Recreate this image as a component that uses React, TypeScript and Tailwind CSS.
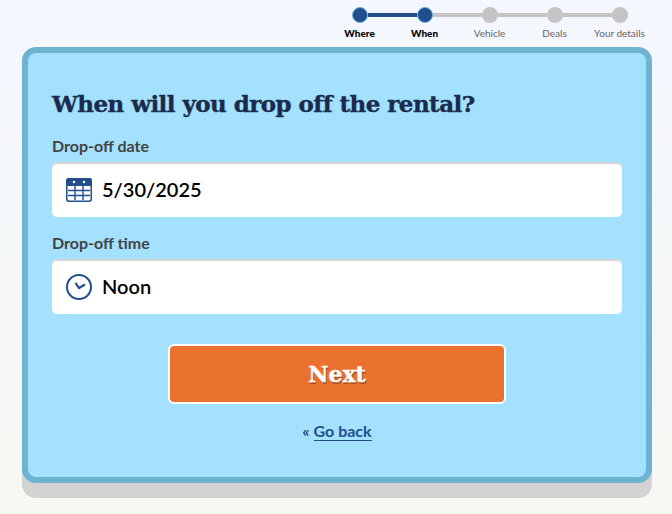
const steps = [
  { name: 'Where', done: true },
  { name: 'When', done: true },
  { name: 'Vehicle', done: false },
  { name: 'Deals', done: false },
  { name: 'Your details', done: false },
];

function Stepper() {
  return (
    <div className="flex flex-col items-end pr-[20px] pt-[7px]">
      <div className="flex items-center w-[325px] justify-center">
        {steps.map((s, i) => (
          <div key={s.name} className="flex items-center">
            {i > 0 && <div className={`w-[49px] h-1 ${i === 1 ? 'bg-[#234e8c]' : 'bg-[#c4c4c4]'}`} />}
            <div className={`w-4 h-4 rounded-full ${s.done ? 'bg-[#234e8c] border border-[#5fb0d8]' : 'bg-[#c4c4c4]'}`} />
          </div>
        ))}
      </div>
      <div className="flex w-[325px] mt-[3px]">
        {steps.map(s => (
          <div
            key={s.name}
            className={`w-[65px] text-center text-[10px] leading-[14px] whitespace-nowrap ${s.done ? 'font-black text-black' : 'text-[#666666]'}`}
          >
            {s.name}
          </div>
        ))}
      </div>
    </div>
  );
}

function CalendarIcon() {
  return (
    <svg width="26" height="24" viewBox="0 0 26 24" fill="none">
      <rect x="0.75" y="0.75" width="24.5" height="22.5" rx="2.5" fill="#fff" stroke="#234e8c" strokeWidth="1.5" />
      <path d="M0 3a3 3 0 0 1 3-3h20a3 3 0 0 1 3 3v5H0z" fill="#234e8c" />
      <circle cx="8" cy="4" r="1.2" fill="#fff" />
      <circle cx="18" cy="4" r="1.2" fill="#fff" />
      <path d="M2 12.5h22M2 17.5h22M9 8v14M17 8v14" stroke="#234e8c" strokeWidth="1.4" />
    </svg>
  );
}

function ClockIcon() {
  return (
    <svg width="26" height="26" viewBox="0 0 26 26" fill="none" stroke="#234e8c">
      <circle cx="13" cy="13" r="12" strokeWidth="2" />
      <path d="M9.5 8.8 L13 14 L19 10.5" strokeWidth="2.2" />
    </svg>
  );
}

function Field({ label, value, icon }: { label: string; value: string; icon: React.ReactNode }) {
  return (
    <div>
      <div className="text-[16px] leading-[24px] font-bold text-[#444444]">{label}</div>
      <div className="mt-[4px] h-[55px] rounded-[5px] bg-white shadow-[inset_0_2px_0_#d5d5d8] flex items-center pl-[14px] gap-[10px]">
        {icon}
        <span className="pb-[2px] text-[20px] font-semibold text-black">{value}</span>
      </div>
    </div>
  );
}

export default function App() {
  return (
    <div className="h-[514px] overflow-hidden bg-gradient-to-b from-[#f4f7ff] to-[#f6f8f2] font-['Lato','Noto_Sans',sans-serif]">
      <Stepper />
      <div className="ml-[22px] mr-[20px] mt-[7px] h-[436px] rounded-[14px] border-[6px] border-[#6fb3d3] bg-[#a3e1fe] shadow-[0_15px_0_#d3d3d3] px-[24px] pt-[35px]">
        <h1 className="font-['DejaVu_Serif',serif] font-bold text-[23px] tracking-[-0.55px] [-webkit-text-stroke:0.4px_#1a2b4c] leading-[32px] text-[#1a2b4c] whitespace-nowrap">
          When will you drop off the rental?
        </h1>
        <div className="mt-[14px] flex flex-col gap-[14px]">
          <Field label="Drop-off date" value="5/30/2025" icon={<CalendarIcon />} />
          <Field label="Drop-off time" value="Noon" icon={<ClockIcon />} />
        </div>
        <div className="mt-[30px] flex justify-center">
          <button className="w-[338px] h-[60px] rounded-[6px] border-2 border-white bg-[#eb712e] text-white font-['DejaVu_Serif',serif] font-bold text-[22px] [-webkit-text-stroke:0.4px_#fff] [text-shadow:1px_2px_0_#a4542a]">
            Next
          </button>
        </div>
        <div className="mt-[15px] text-center text-[16px] leading-[24px] font-bold text-[#234e8c]">
          « <span className="border-b border-[#234e8c]">Go back</span>
        </div>
      </div>
    </div>
  );
}
